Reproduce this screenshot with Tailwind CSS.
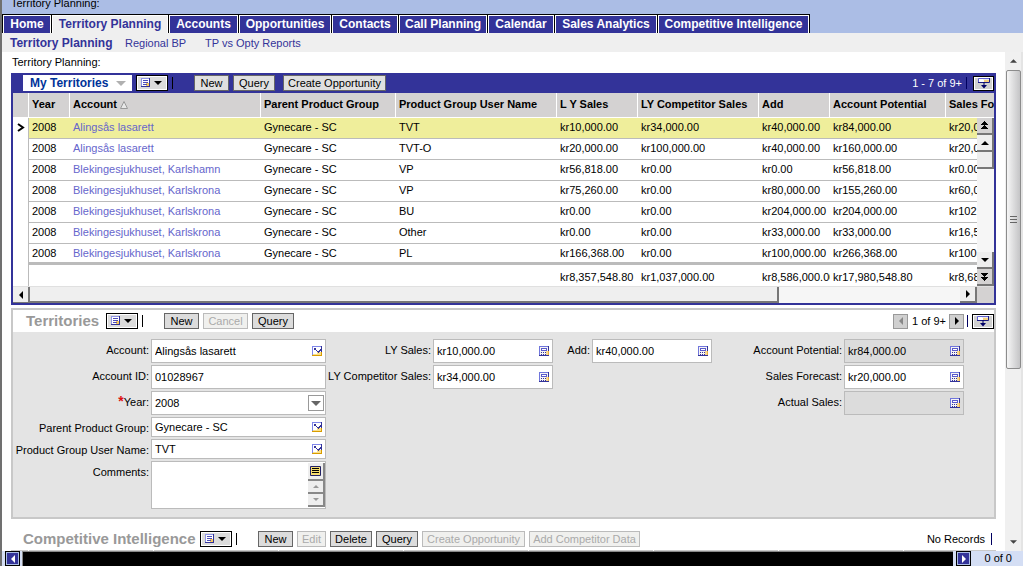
<!DOCTYPE html>
<html lang="en">
<head>
<meta charset="utf-8">
<title>Territory Planning</title>
<script src="https://cdn.jsdelivr.net/npm/@tailwindcss/browser@4"></script>
</head>
<body class="h-screen overflow-hidden bg-white text-black text-[11px] leading-[14px] font-['Liberation_Sans',Arial,sans-serif]">
<svg class="hidden" aria-hidden="true">
  <symbol id="menu" viewBox="0 0 22 10"><g shape-rendering="crispEdges"><path d="M1 1h8v8H1z" fill="#fff"/><path d="M5 5h4v4H5z" fill="#f5c860"/><path d="M0 0h9v1H0zM0 0h1v9H0z" fill="#8f95e6"/><path d="M8 0h1v9H8zM0 8h9v1H0z" fill="#333399"/><path d="M2 2h5v1H2zM2 4h5v1H2zM2 6h4v1H2z" fill="#4d4db8"/></g><path d="M13 3h8l-4 4z" fill="#000"/></symbol>
  <symbol id="more" viewBox="0 0 14 12"><path d="M1.500 5.500v-4h4l1 1h6v3z" fill="#fff"/><path d="M7 3h5v2H7z" fill="#f5cf80"/><path d="M1.500 5.500v-4h11" fill="none" stroke="#6060d0"/><path d="M12.500 1v4.500H1" fill="none" stroke="#1a1a80"/><path d="M6.500 5h1v3H10l-3 3.500L4 8h2.500z" fill="#000066"/></symbol>
  <symbol id="pick" viewBox="0 0 10 10"><g shape-rendering="crispEdges"><path d="M0 0h10v10H0z" fill="#fff"/><path d="M5 6h4v3H1V8h4z" fill="#fbe08a"/><path d="M0 0h10v1H0zM0 0h1v10H0z" fill="#7f86ea"/><path d="M9 0h1v6H9z" fill="#333399"/><path d="M9 6h1v4H0V9h9z" fill="#d89c00"/><path d="M2 2h2v2H2zM4 4h1v1H4zM5 5h1v1H5zM6 5h1v2H6zM7 4h1v2H7zM8 3h1v2H8z" fill="#333399"/></g></symbol>
  <symbol id="calc" viewBox="0 0 10 10"><g shape-rendering="crispEdges"><path d="M0 0h10v10H0z" fill="#f6f4f4"/><path d="M7 5h2v4H7z" fill="#f8d890"/><path d="M0 0h10v1H0zM0 0h1v10H0z" fill="#7076dc"/><path d="M0 9h10v1H0zM9 0h1v5H9z" fill="#333399"/><path d="M9 5h1v4H9z" fill="#eab040"/><path d="M2 2h6v3H2z" fill="#5a5acc"/><path d="M3 3h4v1H3z" fill="#fff"/><path d="M2 6h1v1H2zM4 6h1v1H4zM6 6h1v1H6zM2 8h1v1H2zM4 8h1v1H4zM6 8h1v1H6z" fill="#333399"/></g></symbol>
  <symbol id="up" viewBox="0 0 8 4"><path d="M0 4h8L4 0z" fill="currentColor"/></symbol>
  <symbol id="down" viewBox="0 0 8 4"><path d="M0 0h8L4 4z" fill="currentColor"/></symbol>
  <symbol id="left" viewBox="0 0 4 8"><path d="M4 0v8L0 4z" fill="currentColor"/></symbol>
  <symbol id="right" viewBox="0 0 4 8"><path d="M0 0v8l4-4z" fill="currentColor"/></symbol>
</svg>
<div class="flex h-full flex-col border-l-2 border-[#707070]">
  <header class="shrink-0">
    <div class="flex h-[14px] items-end overflow-hidden bg-[#abbde5] pb-1"><span class="pl-[9px]">Territory Planning:</span></div>
    <nav class="flex h-[19px] bg-[#abbde5] text-[12px] leading-[17px] font-bold text-white" aria-label="Screens">
      <div class="flex gap-px border-x border-t border-black bg-black [&>a]:block [&>a]:whitespace-nowrap [&>a]:border-x [&>a]:border-t [&>a]:border-white [&>a]:text-center">
        <a href="#" class="w-[48px] bg-[#333399]">Home</a>
        <a href="#" class="w-[116px] bg-[#efefef] text-[#333399]">Territory Planning</a>
        <a href="#" class="w-[69px] bg-[#333399]">Accounts</a>
        <a href="#" class="w-[92px] bg-[#333399]">Opportunities</a>
        <a href="#" class="w-[66px] bg-[#333399]">Contacts</a>
        <a href="#" class="w-[88px] bg-[#333399]">Call Planning</a>
        <a href="#" class="w-[66px] bg-[#333399]">Calendar</a>
        <a href="#" class="w-[102px] bg-[#333399]">Sales Analytics</a>
        <a href="#" class="w-[151px] bg-[#333399]">Competitive Intelligence</a>
      </div>
    </nav>
    <nav class="flex h-[19px] items-center bg-[#efefef] pl-2 text-[#333399]" aria-label="Views">
      <a href="#" class="w-[115px] text-[12px] font-bold whitespace-nowrap">Territory Planning</a>
      <a href="#" class="w-[80px]">Regional BP</a>
      <a href="#">TP vs Opty Reports</a>
    </nav>
  </header>

  <div class="flex min-h-0 flex-1">
    <main class="min-w-0 flex-1 overflow-hidden pr-[9px] pl-[9px]">
      <h1 class="h-[21px] pt-[3px] pl-px">Territory Planning:</h1>

      <section class="border-2 border-t-0 border-[#333399]">
        <div class="flex h-5 items-center bg-[#333399] pl-[10px]">
          <button class="flex h-4 w-[109px] items-center justify-between bg-white pr-[6px] pl-[7px] text-[12px] font-bold text-[#003399]">My Territories<svg class="h-[5px] w-[10px] text-[#b0b0b0]"><use href="#down"/></svg></button>
          <button aria-label="Menu" class="ml-1 flex h-4 w-8 items-center justify-center border border-black bg-[#dcdcdc] outline outline-1 -outline-offset-2 outline-white"><svg class="h-[10px] w-[22px]"><use href="#menu"/></svg></button>
          <i class="ml-1 h-3 w-px bg-black"></i>
          <div class="ml-[21px] flex gap-1 [&>button]:h-4 [&>button]:border [&>button]:border-[#666] [&>button]:bg-[#e0e0e0]">
            <button class="w-[35px]">New</button><button class="w-[42px]">Query</button><button class="ml-1 w-[103px]">Create Opportunity</button>
          </div>
          <span class="ml-auto text-white">1 - 7 of 9+</span>
          <i class="mr-[6px] ml-1 h-3 w-px bg-[#000060]"></i>
          <button aria-label="Show more" class="flex h-[15px] w-[21px] items-center justify-center border border-black bg-[#d0d0d0] outline outline-1 -outline-offset-2 outline-white"><svg class="h-3 w-[14px]"><use href="#more"/></svg></button>
        </div>
        <div class="relative overflow-hidden">
          <table class="w-[1012px] min-w-full table-fixed border-separate border-spacing-0 whitespace-nowrap [&_td]:h-[21px] [&_td]:overflow-hidden [&_td]:border-b [&_td]:border-[#bbb] [&_td]:pb-[3px] [&_td]:pl-[3px] [&_td:first-child]:border-r [&_td:first-child]:border-b-0 [&_a]:text-[#6666cc]">
            <colgroup><col class="w-[16px]"><col class="w-[41px]"><col class="w-[191px]"><col class="w-[135px]"><col class="w-[161px]"><col class="w-[81px]"><col class="w-[121px]"><col class="w-[71px]"><col class="w-[116px]"><col></colgroup>
            <thead class="bg-[#d4d2d2] text-left text-[11px] [&_th]:h-[25px] [&_th]:border-r [&_th]:border-b [&_th]:border-white [&_th]:pb-[2px] [&_th]:pl-[3px]">
              <tr><th></th><th>Year</th><th>Account <svg class="inline h-2 w-2" viewBox="0 0 8 8"><path d="M.5 7.500L4 .5l3.500 7z" fill="#e8e8e8" stroke="#999"/></svg></th><th>Parent Product Group</th><th>Product Group User Name</th><th>L Y Sales</th><th>LY Competitor Sales</th><th>Add</th><th>Account Potential</th><th>Sales Forecast</th></tr>
            </thead>
            <tbody class="[&>tr:last-child>td]:border-b-3 [&>tr:last-child>td]:pb-0 [&>tr:last-child>td:first-child]:border-b-0">
              <tr class="bg-[#efee9b]"><td class="bg-white"><svg class="ml-px h-[9px] w-2" viewBox="0 0 8 9"><path d="M1 1l5 3.500L1 8" fill="none" stroke="#000" stroke-width="2"/></svg></td><td>2008</td><td><a href="#">Alingsås lasarett</a></td><td>Gynecare - SC</td><td>TVT</td><td>kr10,000.00</td><td>kr34,000.00</td><td>kr40,000.00</td><td>kr84,000.00</td><td>kr20,000.00</td></tr>
              <tr><td></td><td>2008</td><td><a href="#">Alingsås lasarett</a></td><td>Gynecare - SC</td><td>TVT-O</td><td>kr20,000.00</td><td>kr100,000.00</td><td>kr40,000.00</td><td>kr160,000.00</td><td>kr20,000.00</td></tr>
              <tr><td></td><td>2008</td><td><a href="#">Blekingesjukhuset, Karlshamn</a></td><td>Gynecare - SC</td><td>VP</td><td>kr56,818.00</td><td>kr0.00</td><td>kr0.00</td><td>kr56,818.00</td><td>kr0.00</td></tr>
              <tr><td></td><td>2008</td><td><a href="#">Blekingesjukhuset, Karlskrona</a></td><td>Gynecare - SC</td><td>VP</td><td>kr75,260.00</td><td>kr0.00</td><td>kr80,000.00</td><td>kr155,260.00</td><td>kr60,000.00</td></tr>
              <tr><td></td><td>2008</td><td><a href="#">Blekingesjukhuset, Karlskrona</a></td><td>Gynecare - SC</td><td>BU</td><td>kr0.00</td><td>kr0.00</td><td>kr204,000.00</td><td>kr204,000.00</td><td>kr102,000.00</td></tr>
              <tr><td></td><td>2008</td><td><a href="#">Blekingesjukhuset, Karlskrona</a></td><td>Gynecare - SC</td><td>Other</td><td>kr0.00</td><td>kr0.00</td><td>kr33,000.00</td><td>kr33,000.00</td><td>kr16,500.00</td></tr>
              <tr><td></td><td>2008</td><td><a href="#">Blekingesjukhuset, Karlskrona</a></td><td>Gynecare - SC</td><td>PL</td><td>kr166,368.00</td><td>kr0.00</td><td>kr100,000.00</td><td>kr266,368.00</td><td>kr100,000.00</td></tr>
            </tbody>
            <tfoot class="[&_td]:border-b-0! [&_td]:pt-[2px] [&_td]:pb-0!"><tr><td></td><td></td><td></td><td></td><td></td><td>kr8,357,548.80</td><td>kr1,037,000.00</td><td>kr8,586,000.00</td><td>kr17,980,548.80</td><td>kr8,686,000.00</td></tr></tfoot>
          </table>
          <div class="absolute top-[25px] right-0 bottom-0 flex w-[17px] flex-col bg-[#f6f6f6] [&>button]:flex [&>button]:h-[17px] [&>button]:shrink-0 [&>button]:flex-col [&>button]:items-center [&>button]:justify-center [&>button]:border-r-2 [&>button]:border-b-2 [&>button]:border-[#777] [&>button]:bg-[#eee]">
            <button aria-label="First record" class="bg-[#d4d2d2]!"><svg class="h-[9px] w-[9px]" viewBox="0 0 9 9" shape-rendering="crispEdges"><path d="M4 0h1v1H4zM3 1h3v1H3zM2 2h5v1H2zM1 3h7v1H1zM4 4h1v1H4zM3 5h3v1H3zM2 6h5v1H2zM1 7h7v1H1z"/></svg></button>
            <button aria-label="Previous record"><svg class="h-1 w-2"><use href="#up"/></svg></button>
            <div class="h-[17px] border-r-2 border-b-2 border-[#777] bg-[#eee]"></div>
            <div class="flex-1"></div>
            <button aria-label="Next record"><svg class="h-1 w-2"><use href="#down"/></svg></button>
            <button aria-label="Last record" class="bg-[#d4d2d2]!"><svg class="h-[9px] w-[9px]" viewBox="0 0 9 9" shape-rendering="crispEdges"><path d="M1 1h7v1H1zM2 2h5v1H2zM3 3h3v1H3zM4 4h1v1H4zM1 5h7v1H1zM2 6h5v1H2zM3 7h3v1H3zM4 8h1v1H4z"/></svg></button>
          </div>
        </div>
        <div class="flex h-[17px] border-t border-[#e0e0e0] bg-[#f6f6f6]">
          <button aria-label="Scroll left" class="flex w-[17px] shrink-0 items-center justify-center border-r-2 border-b border-[#777] bg-[#eee]"><svg class="h-2 w-1"><use href="#left"/></svg></button>
          <div class="flex-[749] border-r-2 border-b-2 border-[#777] bg-[#efefef]"></div>
          <div class="flex-[181]"></div>
          <button aria-label="Scroll right" class="flex w-[17px] shrink-0 items-center justify-center border-r-2 border-b-2 border-[#777] bg-[#eee]"><svg class="h-2 w-1"><use href="#right"/></svg></button>
          <div class="w-[17px] shrink-0 bg-[#d4d2d2]"></div>
        </div>
      </section>

      <section class="mt-[3px] border-2 border-[#c8c8c8] bg-[#e4e4e4]">
        <div class="flex h-[22px] items-center bg-white pl-[13px]">
          <h2 class="w-[80px] text-[15px] leading-5 font-bold text-[#999]">Territories</h2>
          <button aria-label="Menu" class="flex h-4 w-8 items-center justify-center border border-black bg-[#dcdcdc] outline outline-1 -outline-offset-2 outline-white"><svg class="h-[10px] w-[22px]"><use href="#menu"/></svg></button>
          <i class="ml-1 h-3 w-px bg-black"></i>
          <div class="ml-[21px] flex gap-1 [&>button]:h-4 [&>button]:border [&>button]:border-[#666] [&>button]:bg-[#dcdcdc] [&>button:disabled]:border-[#bbb] [&>button:disabled]:bg-[#f0f0ee] [&>button:disabled]:text-[#aaa]">
            <button class="w-[35px]">New</button><button disabled class="w-[45px]">Cancel</button><button class="w-[42px]">Query</button>
          </div>
          <button aria-label="Previous" class="mr-1 ml-auto flex h-[15px] w-[15px] items-center justify-center border border-[#999] bg-[#d0d0d0] text-[#888]"><svg class="h-2 w-1"><use href="#left"/></svg></button>
          <span>1 of 9+</span>
          <button aria-label="Next" class="ml-[3px] flex h-[15px] w-[15px] items-center justify-center border border-[#999] bg-[#d0d0d0]"><svg class="h-2 w-1"><use href="#right"/></svg></button>
          <i class="mr-1 ml-[3px] h-3 w-px bg-[#000060]"></i>
          <button aria-label="Show more" class="flex h-[15px] w-[22px] items-center justify-center border border-black bg-[#d0d0d0] outline outline-1 -outline-offset-2 outline-white"><svg class="h-3 w-[14px]"><use href="#more"/></svg></button>
        </div>
        <form class="flex items-start pt-[7px] pb-2 whitespace-nowrap [&_label]:text-right [&>div]:grid [&>div]:gap-x-[2px] [&>div]:gap-y-[2px] [&>div>span]:flex [&>div>span]:items-center [&>div>span]:border [&>div>span]:border-[#bbb] [&>div>span]:bg-white [&_input]:min-w-0 [&_input]:flex-1 [&_input]:bg-transparent [&_input]:pl-[3px] [&_input]:outline-0 [&_svg]:shrink-0">
          <div class="grid-cols-[136px_175px] grid-rows-[24px_24px_24px_20px_20px_48px]">
            <label for="a" class="pt-1">Account:</label><span><input id="a" value="Alingsås lasarett"><svg class="mr-[3px] h-[10px] w-[10px]"><use href="#pick"/></svg></span>
            <label for="b" class="pt-1">Account ID:</label><span><input id="b" value="01028967"></span>
            <label for="c" class="pt-1"><b class="text-[14px] leading-3 text-[#dd1111]">*</b>Year:</label><span><input id="c" value="2008"><button type="button" aria-label="Choose year" class="mr-px flex h-4 w-4 items-center justify-center border border-[#999] bg-white text-[#666]"><svg class="h-[5px] w-[10px]"><use href="#down"/></svg></button></span>
            <label for="d" class="pt-1">Parent Product Group:</label><span><input id="d" value="Gynecare - SC"><svg class="mr-[3px] h-[10px] w-[10px]"><use href="#pick"/></svg></span>
            <label for="e" class="pt-1">Product Group User Name:</label><span><input id="e" value="TVT"><svg class="mr-[3px] h-[10px] w-[10px]"><use href="#pick"/></svg></span>
            <label for="f" class="pt-1">Comments:</label><span><textarea id="f" class="h-full min-w-0 flex-1 resize-none outline-0"></textarea>
              <span class="flex h-[44px] w-[17px] flex-col [&>button]:flex [&>button]:items-center [&>button]:justify-center [&>button]:border-r-2 [&>button]:border-b-2 [&>button]:border-[#888] [&>button]:bg-[#eee] [&>button]:text-[#999]">
                <button type="button" aria-label="Expand comments" class="h-[18px]"><svg class="h-[10px] w-[11px]" viewBox="0 0 11 10"><path d="M.5.5h10v9H.5z" fill="#f5dc70" stroke="#222266"/><path d="M2 2.500h7M2 4.500h7M2 6.500h7" stroke="#000"/></svg></button>
                <button type="button" aria-label="Scroll up" class="h-[13px]"><svg class="h-[3px] w-[6px]"><use href="#up"/></svg></button>
                <button type="button" aria-label="Scroll down" class="h-[13px]"><svg class="h-[3px] w-[6px]"><use href="#down"/></svg></button>
              </span></span>
          </div>
          <div class="grid-cols-[105px_120px] grid-rows-[24px_24px]">
            <label for="g" class="pt-1">LY Sales:</label><span><input id="g" value="kr10,000.00"><svg class="mr-[3px] h-[10px] w-[10px]"><use href="#calc"/></svg></span>
            <label for="h" class="pt-1">LY Competitor Sales:</label><span><input id="h" value="kr34,000.00"><svg class="mr-[3px] h-[10px] w-[10px]"><use href="#calc"/></svg></span>
          </div>
          <div class="grid-cols-[37px_120px] grid-rows-[24px]">
            <label for="i" class="pt-1">Add:</label><span><input id="i" value="kr40,000.00"><svg class="mr-[3px] h-[10px] w-[10px]"><use href="#calc"/></svg></span>
          </div>
          <div class="mr-[30px] ml-auto grid-cols-[100px_120px] grid-rows-[24px_24px_24px]">
            <label for="j" class="pt-1">Account Potential:</label><span class="bg-[#dcdcdc]!"><input id="j" readonly value="kr84,000.00"><svg class="mr-[3px] h-[10px] w-[10px]"><use href="#calc"/></svg></span>
            <label for="k" class="pt-1">Sales Forecast:</label><span><input id="k" value="kr20,000.00"><svg class="mr-[3px] h-[10px] w-[10px]"><use href="#calc"/></svg></span>
            <label for="l" class="pt-1">Actual Sales:</label><span class="bg-[#dcdcdc]!"><input id="l" readonly value=""><svg class="mr-[3px] h-[10px] w-[10px]"><use href="#calc"/></svg></span>
          </div>
        </form>
      </section>

      <section class="pt-[9px]">
        <div class="flex h-[22px] items-center pl-3">
          <h2 class="w-[177px] text-[15px] leading-5 font-bold whitespace-nowrap text-[#999]">Competitive Intelligence</h2>
          <button aria-label="Menu" class="flex h-4 w-8 items-center justify-center border border-black bg-[#dcdcdc] outline outline-1 -outline-offset-2 outline-white"><svg class="h-[10px] w-[22px]"><use href="#menu"/></svg></button>
          <i class="ml-1 h-3 w-px bg-black"></i>
          <div class="ml-[21px] flex gap-1 whitespace-nowrap [&>button]:h-4 [&>button]:border [&>button]:border-[#666] [&>button]:bg-[#dcdcdc] [&>button:disabled]:border-[#bbb] [&>button:disabled]:bg-[#f0f0ee] [&>button:disabled]:text-[#aaa]">
            <button class="w-[35px]">New</button><button disabled class="w-[29px]">Edit</button><button class="w-[42px]">Delete</button><button class="w-[42px]">Query</button><button disabled class="w-[103px]">Create Opportunity</button><button disabled class="w-[111px]">Add Competitor Data</button>
          </div>
          <span class="mr-[6px] ml-auto">No Records</span>
          <i class="mr-1 h-3 w-px bg-[#000060]"></i>
        </div>
        <div class="grid h-6 grid-cols-[17px_repeat(7,124px)_1fr] gap-px [&>i]:bg-[#c8c8c8]"><i></i><i></i><i></i><i></i><i></i><i></i><i></i><i></i><i></i></div>
      </section>
    </main>
    <div class="flex w-[18px] shrink-0 flex-col items-center border-r-2 border-[#e4e4e4] bg-[#f0f0f0] text-[#444]">
      <div class="flex h-[18px] items-center"><svg class="h-1 w-[7px]"><use href="#up"/></svg></div>
      <div class="flex h-[60%] w-[15px] flex-col items-center justify-center gap-[2px] rounded-xs border border-[#8c8c8c] bg-linear-to-r from-[#f6f6f6] to-[#c4c4c6] [&>i]:h-px [&>i]:w-[7px] [&>i]:bg-[#666]"><i></i><i></i><i></i></div>
      <div class="mt-auto flex h-[18px] items-center"><svg class="h-1 w-[7px]"><use href="#down"/></svg></div>
    </div>
  </div>

  <footer class="flex h-[15px] shrink-0 items-center bg-[#d4def4]">
    <button aria-label="Previous message" class="ml-[3px] flex h-[15px] w-[15px] items-center justify-center border border-black bg-[#333399] text-white outline outline-1 -outline-offset-2 outline-[#abbde5]"><svg class="h-2 w-1"><use href="#left"/></svg></button>
    <div class="mr-[3px] ml-[2px] h-full flex-1 border-t border-l border-[#888] bg-black"></div>
    <button aria-label="Next message" class="flex h-[15px] w-[15px] items-center justify-center border border-black bg-[#333399] text-white outline outline-1 -outline-offset-2 outline-[#abbde5]"><svg class="h-2 w-1"><use href="#right"/></svg></button>
    <span class="mr-[11px] ml-[13px] pb-px">0 of 0</span>
  </footer>
</div>
</body>
</html>
